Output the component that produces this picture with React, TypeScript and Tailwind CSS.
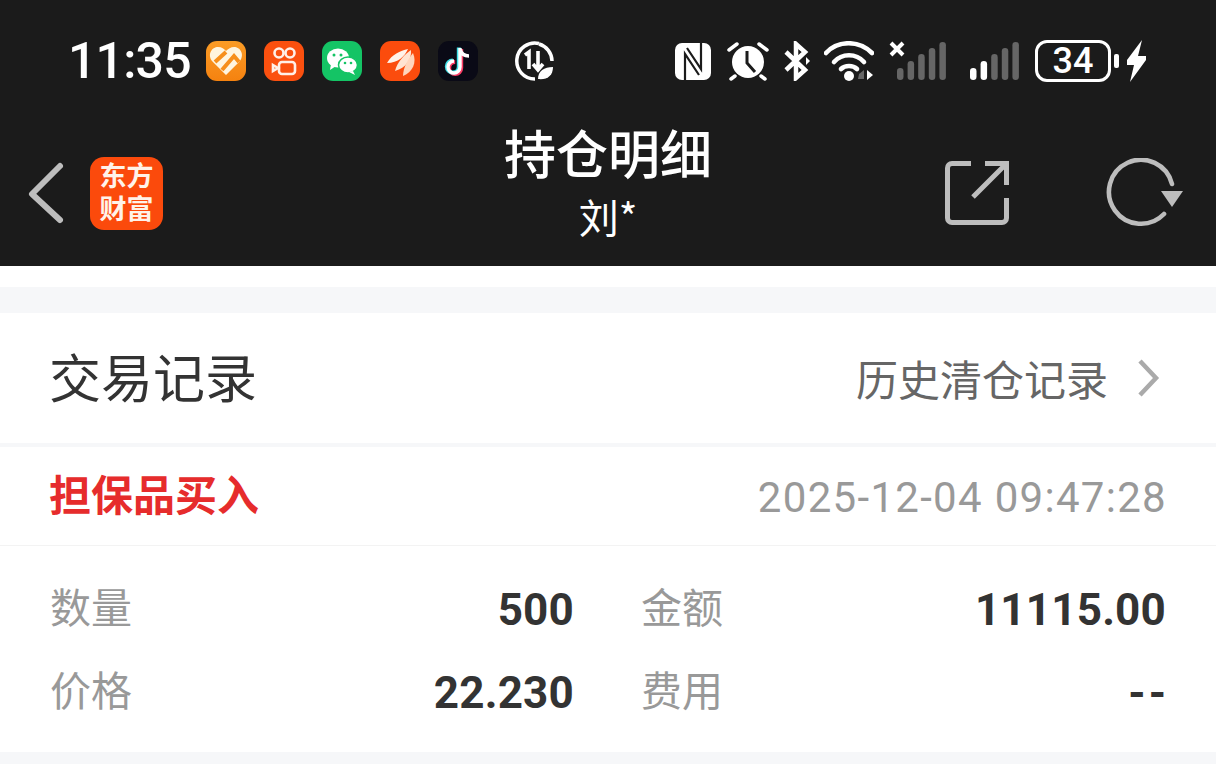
import React from 'react';

const CJK = "font-['Noto_Sans_CJK_SC',sans-serif]";

function AppTile({ bg, children }: { bg: string; children: React.ReactNode }) {
  return (
    <div className={`w-10 h-10 rounded-[11px] flex items-center justify-center ${bg}`}>
      <svg viewBox="0 0 40 40" className="w-10 h-10">{children}</svg>
    </div>
  );
}

function StatusLeft() {
  return (
    <div className="flex items-center">
      <span className="w-[136px] text-[50px] leading-[42px] font-medium font-['Roboto',sans-serif] text-white tracking-[-0.8px] -indent-[2px]">11:35</span>
      <div className="flex gap-[18px]">
        <AppTile bg="bg-gradient-to-b from-[#fb9c25] to-[#f5820f]">
          <path d="M20 34 L6 20 C1 13 6 6 12 6 C16 6 18 8 20 10 C22 8 25 6 28 6 C34 6 39 13 34 20 Z" fill="#fff5df" />
          <path d="M9 21 L20 11 M16 29 L28 15 L33 21" stroke="#f78f1b" strokeWidth="4" fill="none" />
        </AppTile>
        <AppTile bg="bg-[#fb500f]">
          <g fill="none" stroke="#fff0e8" strokeWidth="2.6">
            <circle cx="15" cy="12" r="4.5" />
            <circle cx="26" cy="12" r="4.5" />
            <rect x="15" y="21" width="16" height="12" rx="3" />
            <path d="M9 24 L14 27 L9 30 Z" />
          </g>
        </AppTile>
        <AppTile bg="bg-[#14c465]">
          <ellipse cx="16" cy="17" rx="11" ry="9.5" fill="#fff" />
          <path d="M9 23 L8 29 L14 25 Z" fill="#fff" />
          <ellipse cx="26" cy="24" rx="9.5" ry="8" fill="#fff" stroke="#14c465" strokeWidth="1.5" />
          <path d="M31 30 L33 34 L27 31 Z" fill="#fff" />
          <circle cx="12" cy="14" r="1.5" fill="#14c465" />
          <circle cx="19" cy="14" r="1.5" fill="#14c465" />
          <circle cx="23" cy="22" r="1.3" fill="#14c465" />
          <circle cx="29" cy="22" r="1.3" fill="#14c465" />
        </AppTile>
        <AppTile bg="bg-[#fb4c0d]">
          <path d="M7 22 C12 13 20 10 28 8 C25 15 18 22 7 22 Z" fill="#fff3ea" />
          <path d="M15 30 C17 21 25 13 31 9 C32 18 26 27 15 30 Z" fill="#ffe4d2" />
          <path d="M23 35 C23 26 29 17 33 12 C37 21 33 31 23 35 Z" fill="#ffd6bd" />
        </AppTile>
        <AppTile bg="bg-[#0a0a16]">
          <path d="M22 7 V26 A6 6 0 1 1 16 20" fill="none" stroke="#fb3d66" strokeWidth="4" transform="translate(1.2 1)" />
          <path d="M22 7 V26 A6 6 0 1 1 16 20" fill="none" stroke="#40e0e8" strokeWidth="4" transform="translate(-1.2 -0.5)" />
          <path d="M22 7 V26 A6 6 0 1 1 16 20 M22 8 C23 12 26 15 31 15" fill="none" stroke="#fff" strokeWidth="3.4" />
        </AppTile>
      </div>
      <svg viewBox="0 0 40 40" className="w-10 h-10 ml-[36px]">
        <path d="M25 2.5 A18 18 0 1 0 21 38" fill="none" stroke="#fff" strokeWidth="3.5" />
        <path d="M25 3 A18 18 0 0 1 38 20" fill="none" stroke="#fff" strokeWidth="3.5" />
        <path d="M11 14 L15 11 V28 M24 10 V28 M19 23 L24 29 L29 23" fill="none" stroke="#fff" strokeWidth="3.6" />
        <path d="M24 38 C24 30 30 26 39 26 C39 35 33 39 24 38 Z" fill="#fff" />
      </svg>
    </div>
  );
}

function Bars({ lit }: { lit: number }) {
  const heights = [12, 19, 26, 32, 38];
  return (
    <svg viewBox="0 0 50 40" className="w-[50px] h-10">
      {heights.map((h, i) => (
        <rect key={i} x={i * 10.6} y={39 - h} width="6.5" height={h} rx="3.2" fill={i < lit ? '#fff' : '#666'} />
      ))}
    </svg>
  );
}

function StatusRight() {
  return (
    <div className="flex items-center">
      <svg viewBox="0 0 36 37" className="w-9 h-[37px]">
        <rect x="0" y="0" width="36" height="37" rx="7" fill="#fff" />
        <path d="M10 37 V11 L24 32" fill="none" stroke="#1b1b1b" strokeWidth="2.2" />
        <path d="M26 0 V26 L12 5" fill="none" stroke="#1b1b1b" strokeWidth="2.2" />
      </svg>
      <svg viewBox="0 0 42 40" className="w-[42px] h-10 ml-[16px]">
        <circle cx="21" cy="21" r="16" fill="#fff" />
        <path d="M20 10 V22 L28 31" fill="none" stroke="#1b1b1b" strokeWidth="3" />
        <path d="M2 9 L10 3 M32 3 L40 9 M8 35 L4 38 M34 35 L38 38" stroke="#fff" strokeWidth="3.5" strokeLinecap="round" />
      </svg>
      <svg viewBox="0 0 28 40" className="w-7 h-10 ml-[14px]">
        <path d="M3 11 L22 29 L13 37 V3 L22 11 L3 29" fill="none" stroke="#fff" strokeWidth="4.5" />
        <path d="M23 16 L27 20 L23 24 Z" fill="#fff" />
      </svg>
      <svg viewBox="0 0 50 40" className="w-[50px] h-10 ml-[13px]">
        <path d="M2 12 C14 -1 35 -1 48 12" fill="none" stroke="#fff" strokeWidth="4.6" strokeLinecap="round" />
        <path d="M10 21 C18 12 32 12 40 21" fill="none" stroke="#fff" strokeWidth="4.6" strokeLinecap="round" />
        <path d="M17 28 C21 24 29 24 33 28" fill="none" stroke="#fff" strokeWidth="4.6" strokeLinecap="round" />
        <circle cx="25" cy="35" r="5" fill="#fff" />
        <path d="M35 33 L40 29 V38 H34 Z" fill="#666" />
        <path d="M43 29 V39 L49 34 Z" fill="#fff" />
      </svg>
      <div className="relative ml-[23px]">
        <Bars lit={0} />
        <svg viewBox="0 0 16 16" className="absolute top-0 -left-2 w-4 h-4">
          <path d="M2 2 L14 14 M14 2 L2 14" stroke="#fff" strokeWidth="4" />
        </svg>
      </div>
      <div className="ml-[23px]"><Bars lit={2} /></div>
      <div className="ml-[15px] w-[76px] h-[42px] rounded-[12px] border-[3px] border-white flex items-center justify-center">
        <span className="text-[36px] leading-none font-medium text-white font-['Roboto',sans-serif]">34</span>
      </div>
      <div className="ml-[3px] w-[5px] h-[14px] rounded-[2px] bg-white" />
      <svg viewBox="0 0 19 42" className="w-[19px] h-[42px] ml-[8px]">
        <path d="M15 0 L0 20 V25 H7 L3 42 L19 20 V16 H11 L15 0 Z" fill="#fff" />
      </svg>
    </div>
  );
}

const rows = [
  ['数量', '500'],
  ['金额', '11115.00'],
  ['价格', '22.230'],
  ['费用', '--'],
];

export default function App() {
  return (
    <div className={`w-[1216px] h-[764px] overflow-hidden bg-[#f6f7f9] ${CJK}`}>
      <div className="h-[266px] bg-[#1b1b1b] flex flex-col">
        <div className="h-[120px] pt-[40px] pl-[70px] pr-[70px] flex items-start justify-between">
          <StatusLeft />
          <StatusRight />
        </div>
        <div className="relative flex-1 flex items-start">
          <svg viewBox="0 0 40 64" className="w-10 h-16 ml-[27px] mt-[41px]">
            <path d="M33 5 L5 33 L33 59" fill="none" stroke="#bdbdbd" strokeWidth="6" strokeLinecap="round" strokeLinejoin="round" />
          </svg>
          <div className="ml-[23px] mt-[37px] w-[73px] h-[73px] pb-[6px] rounded-[14px] bg-[#fb4a0c] flex flex-col items-center justify-center text-[#fff3ea] text-[27px] leading-[33px] font-bold">
            <span>东方</span>
            <span>财富</span>
          </div>
          <div className="absolute left-0 right-0 -top-[3px] flex flex-col items-center text-white">
            <span className="text-[52px] leading-[70px] font-medium">持仓明细</span>
            <span className="text-[40px] leading-[52px] mt-[3px]">刘*</span>
          </div>
          <div className="ml-auto mr-[32px] mt-[41px] flex items-start">
            <svg viewBox="0 0 64 64" className="w-16 h-16">
              <path d="M26 2.5 H7 A4.5 4.5 0 0 0 2.5 7 V57 A4.5 4.5 0 0 0 7 61.5 H57 A4.5 4.5 0 0 0 61.5 57 V37 M40 2.5 H61.5 V24 M61.5 2.5 L28 36" fill="none" stroke="#bdbdbd" strokeWidth="5" />
            </svg>
            <svg viewBox="0 0 78 70" className="w-[78px] h-[70px] ml-[97px] -mt-[3px]">
              <path d="M58 56 A32 32 0 1 1 66 26" fill="none" stroke="#bdbdbd" strokeWidth="4.6" strokeLinecap="round" />
              <path d="M55 33 H77 L66 49 Z" fill="#bdbdbd" />
            </svg>
          </div>
        </div>
      </div>
      <div className="h-[21px] bg-white" />
      <div className="h-[26px]" />
      <div className="bg-white">
        <div className="h-[130px] flex items-center justify-between pl-[50px] pr-[56px]">
          <span className="text-[52px] leading-none text-[#333] -ml-px pb-[5px]">交易记录</span>
          <div className="flex items-center">
            <span className="text-[42px] leading-none text-[#666]">历史清仓记录</span>
            <svg viewBox="0 0 24 40" className="w-6 h-10 ml-[28px]">
              <path d="M4 3 L20 20 L4 37" fill="none" stroke="#aaa" strokeWidth="4.5" />
            </svg>
          </div>
        </div>
        <div className="h-[4px] bg-[#f6f7f9]" />
        <div className="h-[99px] flex items-center justify-between pl-[50px] pr-[50px] border-b border-[#f3f3f3]">
          <span className="text-[42px] leading-none font-bold text-[#e62c2c] -ml-px pb-[6px]">担保品买入</span>
          <span className="text-[42px] leading-none text-[#999] font-['Roboto',sans-serif] tracking-[1.3px] -mr-px pt-1">2025-12-04 09:47:28</span>
        </div>
        <div className="h-[206px] pt-[21px] pl-[50px] pr-[50px] grid grid-cols-[524px_1fr] auto-rows-[83px] gap-x-[67px]">
          {rows.map(([label, value]) => (
            <div key={label} className="flex items-center justify-between">
              <span className="text-[41px] leading-none text-[#999] pb-[6px]">{label}</span>
              <span className={`text-[44px] leading-none font-bold text-[#333] font-['Roboto',sans-serif] pt-[2px] ${value === '--' ? 'tracking-[3px] -mr-[3px]' : 'tracking-[0.2px]'}`}>{value}</span>
            </div>
          ))}
        </div>
      </div>
    </div>
  );
}
